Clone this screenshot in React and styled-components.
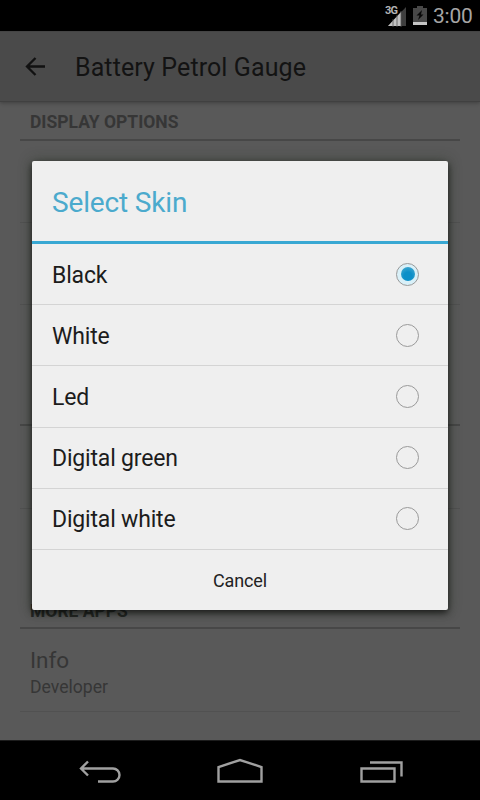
import React from "react";
import styled, { createGlobalStyle } from "styled-components";

const GlobalStyle = createGlobalStyle`
  * { box-sizing: border-box; }
  body { margin: 0; background: #000; font-family: Roboto, "Noto Sans", sans-serif; }
`;

const Screen = styled.div`
  position: relative;
  width: 480px;
  height: 800px;
  display: flex;
  flex-direction: column;
  overflow: hidden;
  background: #000;
`;

const StatusBar = styled.header`
  height: 31px;
  flex: none;
  display: flex;
  align-items: center;
  justify-content: flex-end;
  padding-right: 7px;
  background: #000;
`;

const Clock = styled.span`
  width: 40px;
  margin-left: 6px;
  color: #a6a6a6;
  font-size: 21px;
  line-height: 31px;
  padding-top: 2px;
  letter-spacing: -0.2px;
  white-space: nowrap;
`;

const SignalBox = styled.div`
  position: relative;
  width: 22px;
  height: 22px;
  margin-right: 6px;
`;

const NetworkType = styled.span`
  position: absolute;
  left: 0;
  top: 0;
  color: #b4b4b4;
  font-size: 11px;
  font-weight: 700;
  line-height: 12px;
  letter-spacing: -0.9px;
`;

const Icon = styled.svg`
  display: block;
  flex: none;
`;

const Toolbar = styled.div`
  position: relative;
  z-index: 1;
  height: 71px;
  flex: none;
  display: flex;
  align-items: center;
  padding-left: 24px;
  gap: 29px;
  background: #4a4a4a;
  border-top: 1px solid #444;
  border-bottom: 1px solid #404040;
  box-shadow: 0 1px 4px rgba(0, 0, 0, 0.3);
`;

const ToolbarTitle = styled.h1`
  margin: 0;
  padding-top: 3px;
  color: #131313;
  font-size: 25px;
  font-weight: 400;
  line-height: 30px;
  letter-spacing: 0.1px;
`;

const Settings = styled.main`
  flex: 1;
  padding: 0 20px;
  background: #595959;
`;

const SectionTitle = styled.h2`
  height: ${(p) => p.$height}px;
  margin: 0;
  padding: 0 10px ${(p) => (p.$dark ? 6 : 7)}px;
  display: flex;
  align-items: flex-end;
  border-bottom: 2px solid #474747;
  color: ${(p) => (p.$dark ? "#242624" : "#363636")};
  font-size: 17.5px;
  font-weight: 700;
  line-height: 20px;
`;

const Preference = styled.div`
  height: ${(p) => p.$height}px;
  padding: 17px 10px 0;
  border-bottom: ${(p) => (p.$last ? "0" : "1px solid #515151")};
`;

const PreferenceName = styled.div`
  color: #363636;
  font-size: 22.5px;
  line-height: 28px;
`;

const PreferenceNote = styled.div`
  color: #363636;
  font-size: 17.6px;
  line-height: 27px;
`;

const Dialog = styled.section`
  position: absolute;
  z-index: 2;
  left: 32px;
  top: 161px;
  width: 416px;
  height: 449px;
  display: flex;
  flex-direction: column;
  border-radius: 2px;
  background: #efefef;
  box-shadow: 0 3px 7px rgba(0, 0, 0, 0.65), 0 0 14px rgba(35, 50, 30, 0.42);
`;

const DialogTitle = styled.h2`
  height: 83px;
  flex: none;
  margin: 0;
  padding: 4px 20px 0;
  display: flex;
  align-items: center;
  border-bottom: 3px solid #39a8d3;
  color: #4baacd;
  font-size: 28px;
  font-weight: 400;
  line-height: 34px;
  letter-spacing: -0.15px;
`;

const Option = styled.div`
  flex: 1;
  padding: 0 29px 0 20px;
  display: flex;
  align-items: center;
  justify-content: space-between;
  border-bottom: 1px solid #d4d4d4;
  color: #1c1c1c;
  font-size: 23px;
  letter-spacing: -0.18px;
`;

const OptionLabel = styled.span`
  padding-top: 3px;
  line-height: 28px;
  white-space: nowrap;
`;

const Radio = styled.span`
  width: 23px;
  height: 23px;
  display: grid;
  place-items: center;
  border: 1.5px solid #9a9a9a;
  border-radius: 50%;
  background: ${(p) => (p.$selected ? "#d9f0f8" : "transparent")};

  &::after {
    content: "";
    width: 14px;
    height: 14px;
    border-radius: 50%;
    background: ${(p) =>
      p.$selected ? "radial-gradient(circle at 50% 65%, #0c8fc8 35%, #45aad0 90%)" : "transparent"};
  }
`;

const CancelButton = styled.button`
  height: 60px;
  flex: none;
  border: 0;
  padding: 0;
  background: transparent;
  color: #222;
  font-family: inherit;
  font-size: 18px;
  letter-spacing: -0.15px;
`;

const NavBar = styled.nav`
  height: 60px;
  flex: none;
  display: flex;
  justify-content: center;
  align-items: center;
  gap: 80px;
  background: #000;
  border-top: 1px solid #1c1c1c;
`;

const options = ["Black", "White", "Led", "Digital green", "Digital white"];

export default function App() {
  return (
    <>
      <GlobalStyle />
      <Screen>
        <StatusBar>
          <SignalBox>
            <Icon width="22" height="22" viewBox="0 0 22 22">
              <path d="M3 21 21 2v19z" fill="#3e3e3e" />
              <path d="M3 21 16 7v14z" fill="#c2c2c2" />
              <path d="M8 14v8M12 10v12M16 6v16" stroke="#555" strokeWidth=".8" />
              <path d="M0 0h13v10H0z" fill="#000" />
            </Icon>
            <NetworkType>3G</NetworkType>
          </SignalBox>
          <Icon width="14" height="21" viewBox="0 0 14 21">
            <path d="M4 1h6v2h4v17H0V3h4z" fill="#484848" />
            <path d="M0 17h14v3H0z" fill="#c6c6c6" />
            <path d="m9 5-5.500 5.500h3L5 15l5.500-5.500H8z" fill="#080808" />
          </Icon>
          <Clock>3:00</Clock>
        </StatusBar>

        <Toolbar>
          <Icon width="22" height="22" viewBox="0 0 22 22" fill="none" stroke="#111" strokeWidth="2.3">
            <path d="M21 10.500H3M11.500 2 3 10.500l8.500 8.500" />
          </Icon>
          <ToolbarTitle>Battery Petrol Gauge</ToolbarTitle>
        </Toolbar>

        <Settings>
          <SectionTitle $height={39}>DISPLAY OPTIONS</SectionTitle>
          <Preference $height={82} />
          <Preference $height={82} />
          <Preference $height={82} $last />
          <SectionTitle $height={39} />
          <Preference $height={83} />
          <Preference $height={82} $last />
          <SectionTitle $height={38} $dark>MORE APPS</SectionTitle>
          <Preference $height={83}>
            <PreferenceName>Info</PreferenceName>
            <PreferenceNote>Developer</PreferenceNote>
          </Preference>
        </Settings>

        <NavBar>
          <Icon width="60" height="40" viewBox="0 0 60 40" fill="none" stroke="#a0a0a0" strokeWidth="2.4">
            <path d="M11 17.500h32a6.500 6.500 0 0 1 0 13H28M18 10.500l-7 7 7 7" />
          </Icon>
          <Icon width="60" height="40" viewBox="0 0 60 40" fill="none" stroke="#a0a0a0" strokeWidth="2.4">
            <path d="M8.500 30.500V16L30 9l21.500 7v14.500z" />
          </Icon>
          <Icon width="60" height="40" viewBox="0 0 60 40" fill="none" stroke="#a0a0a0" strokeWidth="2.4">
            <path d="M11.500 17.500h33v13h-33zM20 11.500h31.500v14" />
          </Icon>
        </NavBar>

        <Dialog role="dialog" aria-label="Select Skin">
          <DialogTitle>Select Skin</DialogTitle>
          {options.map((name, i) => (
            <Option key={name}>
              <OptionLabel>{name}</OptionLabel>
              <Radio role="radio" aria-checked={i === 0} $selected={i === 0} />
            </Option>
          ))}
          <CancelButton>Cancel</CancelButton>
        </Dialog>
      </Screen>
    </>
  );
}
